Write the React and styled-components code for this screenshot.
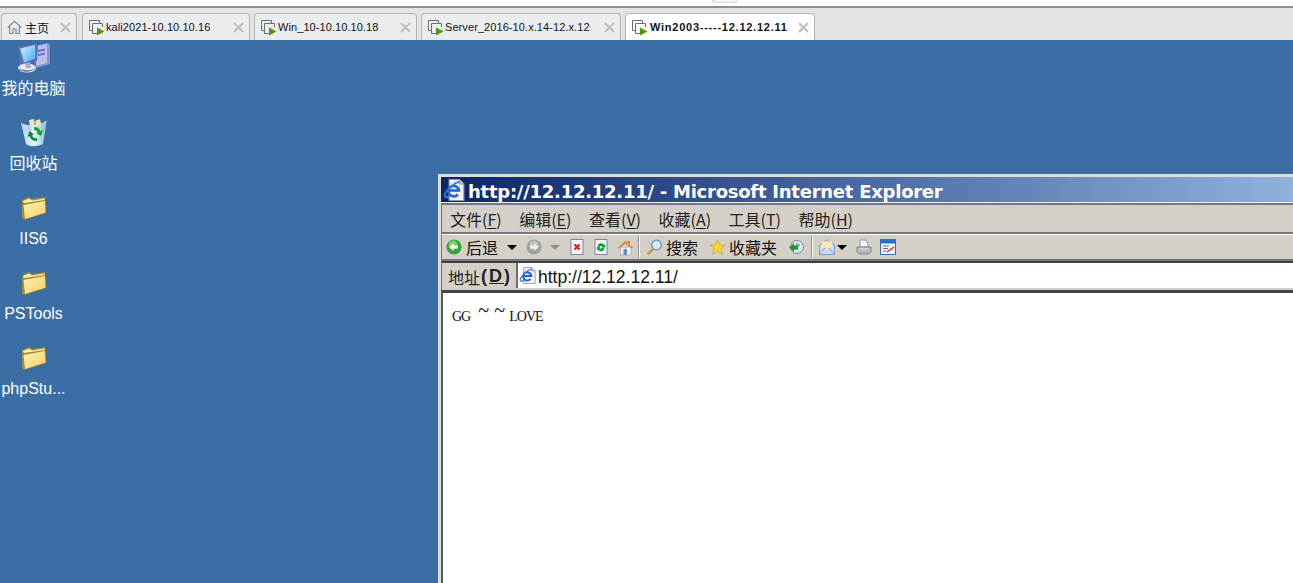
import React from 'react'
import styled, { createGlobalStyle } from 'styled-components'

const CJK = '"Noto Sans CJK SC", "Liberation Sans", sans-serif'

const GlobalStyle = createGlobalStyle`
  html, body {
    margin: 0;
    padding: 0;
    height: 100%;
    overflow: hidden;
    background: #3a6ea5;
  }
`

const VmGlyph = () => (
  <svg width="17" height="17" viewBox="0 0 17 17">
    <path d="M5 11.500H1.500V1.500H11.500V4" fill="none" stroke="#6a6e72" />
    <path d="M9 14.500H4.500V4.500H14.500V8" fill="none" stroke="#6a6e72" />
    <path d="M9 8.500L16.500 12.500L9 16.500Z" fill="#4f9a07" />
  </svg>
)

const HomeGlyph = () => (
  <svg width="15" height="15" viewBox="0 0 15 15">
    <path
      d="M.8 7.500L7.500 1.200L14.200 7.500M2.600 6.400V13.500H6V9H9V13.500H12.400V6.400"
      fill="none"
      stroke="#7b8086"
      strokeWidth="1.100"
    />
  </svg>
)

const CloseGlyph = () => (
  <svg width="11" height="11" viewBox="0 0 11 11">
    <path d="M1 1L10 10M10 1L1 10" stroke="#bcbec0" strokeWidth="2" />
  </svg>
)

const ComputerIcon = () => (
  <svg width="34" height="32" viewBox="0 0 34 32">
    <defs>
      <linearGradient id="pcScreen" x1="0" y1="0" x2="1" y2="1">
        <stop offset="0" stopColor="#d5f2ff" />
        <stop offset="1" stopColor="#46a8f2" />
      </linearGradient>
    </defs>
    <path d="M18 4L31 1L33 3V22L19 26Z" fill="#8d93d6" />
    <path d="M18 4L30 2V21L19 24Z" fill="#b9bde9" />
    <path d="M21 8L28 6.500V8.500L21 10ZM21 12L28 10.500V12.500L21 14Z" fill="#6a70b9" />
    <circle cx="29" cy="19" r="1" fill="#9ee06f" />
    <path d="M1 5L18 1L21 3L20 19L7 24L3 23Z" fill="#5a6fb0" />
    <path d="M3 6.500L18 3L18.500 16.500L7 20.500Z" fill="url(#pcScreen)" />
    <ellipse cx="10" cy="26" rx="9" ry="4.500" fill="#e4e6ef" />
    <path d="M1 26C4 31 14 31 19 26C15 29 6 29 1 26Z" fill="#6e748f" />
    <path d="M8 21L13 20L14 26H9Z" fill="#a3a8c5" />
  </svg>
)

const RecycleIcon = () => (
  <svg width="28" height="29" viewBox="0 0 28 29">
    <defs>
      <linearGradient id="binBody" x1="0" y1="0" x2="1" y2="0">
        <stop offset="0" stopColor="#a7d9f6" />
        <stop offset="0.5" stopColor="#e8f6fe" />
        <stop offset="1" stopColor="#7fb9e2" />
      </linearGradient>
    </defs>
    <path d="M1 5C8 9 20 8 27 2L23 26C17 29 10 29 6 26Z" fill="url(#binBody)" />
    <path d="M9 2L14 1L15 7L10 8ZM15 3L20 1L21 6L16 8Z" fill="#f1e6b4" />
    <path d="M6 8L11 7L12 18L8 17Z" fill="#c8c9ee" />
    <path d="M14 9A6.500 6.500 0 0 1 20.500 13L23 12L21 18L16 15L18 14.500A4 4 0 0 0 14 12Z" fill="#13a32e" />
    <path d="M17 23A6.500 6.500 0 0 1 9.500 18L7.500 19L9.500 13L14 16.500L12 17.200A4 4 0 0 0 17 20Z" fill="#0d8c28" />
  </svg>
)

const FolderIcon = () => (
  <svg width="26" height="25" viewBox="0 0 26 25">
    <defs>
      <linearGradient id="folderFace" x1="0" y1="0" x2="1" y2="1">
        <stop offset="0" stopColor="#fff3b8" />
        <stop offset="1" stopColor="#f7cf63" />
      </linearGradient>
    </defs>
    <path d="M1 4L8 1L11 3L24 1L25 17L3 24L1 22Z" fill="#a88a33" />
    <path d="M2 5L8 2.500L11 4.500L23.500 2.500V4L3 7Z" fill="#fdf1b4" />
    <path d="M2.500 9L24 5L24.500 16.500L4 23Z" fill="url(#folderFace)" />
  </svg>
)

const IeGlyph = ({ size = 20 }) => (
  <svg width={size} height={size} viewBox="0 0 20 20">
    <path d="M5.500 .5H15L19 4.500V19.500H5.500Z" fill="#f4f4f2" stroke="#8d929c" />
    <path d="M15 .5V4.500H19" fill="#c6ccd6" stroke="#8d929c" />
    <path
      d="M6 10.500H14.500A4.800 4.800 0 1 0 13.500 14"
      fill="none"
      stroke="#1f63d0"
      strokeWidth="2.400"
    />
    <path
      d="M15 3C12 2 5 8 2 13C.5 16 2 17.500 5.500 16"
      fill="none"
      stroke="#2f7ce6"
      strokeWidth="1.600"
    />
  </svg>
)

const BackGlyph = () => (
  <svg width="16" height="16" viewBox="0 0 16 16">
    <circle cx="8" cy="8" r="7.600" fill="#37a33a" />
    <circle cx="7" cy="6" r="4.500" fill="#74cf66" />
    <path d="M3.500 8L7.500 4V6.500H12V9.500H7.500V12Z" fill="#fff" />
  </svg>
)

const ForwardGlyph = () => (
  <svg width="16" height="16" viewBox="0 0 16 16">
    <circle cx="8" cy="8" r="7.600" fill="#a2a19d" />
    <circle cx="8" cy="6.500" r="4.500" fill="#c3c2bd" />
    <path d="M12.500 8L8.500 4V6.500H4V9.500H8.500V12Z" fill="#eeeeea" />
  </svg>
)

const PageGlyph = ({ children }) => (
  <svg width="14" height="16" viewBox="0 0 14 16">
    <rect x="1" y=".5" width="12" height="15" fill="#f4f6fb" stroke="#7385ad" />
    {children}
  </svg>
)

const StopGlyph = () => (
  <PageGlyph>
    <path d="M4.500 5.500L9.500 10.500M9.500 5.500L4.500 10.500" stroke="#dc2020" strokeWidth="2.200" />
  </PageGlyph>
)

const RefreshGlyph = () => (
  <PageGlyph>
    <path d="M3.500 7.500A3.500 3.500 0 0 1 10 6L11 5V8.500H7.500L8.500 7.500A1.800 1.800 0 0 0 5.500 8Z" fill="#159c30" />
    <path d="M10.500 9A3.500 3.500 0 0 1 4 10.500L3 11.500V8H6.500L5.500 9A1.800 1.800 0 0 0 8.500 8.500Z" fill="#159c30" />
  </PageGlyph>
)

const HouseGlyph = () => (
  <svg width="17" height="17" viewBox="0 0 17 17">
    <path d="M3.500 8H14V16H3.500Z" fill="#eef0f6" stroke="#9ea6b8" strokeWidth=".7" />
    <path d="M.5 9L8.500 1.500L16.500 9L14.500 9.500L8.500 4.500L2.500 9.500Z" fill="#e88a3a" />
    <path d="M6.500 10H10V16H6.500Z" fill="#5f8fd0" />
    <path d="M11 2H13V5L11 3.500Z" fill="#c96a2a" />
  </svg>
)

const SearchGlyph = () => (
  <svg width="17" height="17" viewBox="0 0 17 17">
    <path d="M7 10L1.500 15.500" stroke="#c69a58" strokeWidth="2.500" />
    <circle cx="10.500" cy="6" r="4.800" fill="#d9ecfb" stroke="#5f8ab8" strokeWidth="1.200" />
  </svg>
)

const StarGlyph = () => (
  <svg width="17" height="17" viewBox="0 0 17 17">
    <path
      d="M8.500 .8L10.800 6H16.200L11.900 9.500L13.500 15.500L8.500 12.200L3.500 15.500L5.100 9.500L.8 6H6.200Z"
      fill="#f8d63c"
      stroke="#c7a22b"
      strokeWidth=".7"
    />
  </svg>
)

const HistoryGlyph = () => (
  <svg width="16" height="16" viewBox="0 0 16 16">
    <circle cx="9" cy="8" r="6.500" fill="#dfe6ee" stroke="#7c8794" />
    <path d="M9 4V8L12 5.500" fill="none" stroke="#3f6b9c" />
    <path d="M1 8.500L6 4V6.500H10V10.500H6V13Z" fill="#1d9a37" />
  </svg>
)

const MailGlyph = () => (
  <svg width="16" height="16" viewBox="0 0 16 16">
    <path d="M.5 6L8 .8L15.500 6V15.500H.5Z" fill="#c8dcf6" stroke="#7e9ccb" />
    <path d="M3 2.500H13V8L8 10.500L3 8Z" fill="#f7e9b2" />
    <path d="M.5 15.500L6 9M15.500 15.500L10 9" stroke="#7e9ccb" fill="none" />
  </svg>
)

const PrintGlyph = () => (
  <svg width="16" height="16" viewBox="0 0 16 16">
    <path d="M4 1H10L12 5V8H4Z" fill="#f3f4f6" stroke="#8b8e94" strokeWidth=".8" />
    <path d="M1 8H15V13L13 15H3L1 13Z" fill="#b5b7bc" stroke="#73767c" strokeWidth=".8" />
    <path d="M3 10H13" stroke="#e6e7ea" />
  </svg>
)

const EditGlyph = () => (
  <svg width="16" height="16" viewBox="0 0 16 16">
    <rect x=".5" y=".5" width="15" height="15" fill="#f4f7fc" stroke="#356ab0" />
    <rect x="1" y="1" width="14" height="3.500" fill="#2b70c9" />
    <path d="M3 7H9M3 9.500H8M3 12H6" stroke="#5d6f8a" />
    <path d="M7 13L14 8" stroke="#d8503a" strokeWidth="1.600" />
  </svg>
)

const Caret = styled.span`
  width: 0;
  height: 0;
  margin-left: ${(p) => p.$gap || 0}px;
  border-style: solid;
  border-width: 5px 5px 0 5px;
  border-color: ${(p) => (p.$muted ? '#8f8e8a' : '#000')} transparent transparent;
`

const Page = styled.div`
  display: flex;
  flex-direction: column;
  width: 1293px;
  height: 583px;
  overflow: hidden;
`

const TopEdge = styled.div`
  height: 6px;
  padding-left: 712px;
  background: #fff;
  border-bottom: 2px solid #8e8e8e;
`

const TopNotch = styled.div`
  box-sizing: border-box;
  width: 25px;
  height: 3px;
  border: 1px solid #d8d8d8;
  border-top: 0;
  border-radius: 0 0 4px 4px;
  background: #f4f4f4;
`

const TabStrip = styled.div`
  display: flex;
  align-items: flex-end;
  gap: 4px;
  height: 32px;
  padding-left: 1px;
  background: #e3e4e5;
`

const Tab = styled.div`
  display: flex;
  align-items: center;
  box-sizing: border-box;
  flex: none;
  width: ${(p) => p.$width}px;
  height: 27px;
  margin-right: ${(p) => p.$after || 0}px;
  padding: 0 5px;
  border: 1px solid #b3b3b3;
  border-bottom: 0;
  border-radius: 4px 4px 0 0;
  background: ${(p) => (p.$active ? '#fff' : '#ebecee')};
  font: ${(p) => (p.$active ? 'bold' : 'normal')} 11px "Liberation Sans", ${CJK};
  letter-spacing: ${(p) => (p.$active ? 0.75 : 0.08)}px;
  color: #10131a;
  white-space: nowrap;
`

const TabLabel = styled.span`
  flex: 1;
  margin-left: ${(p) => p.$gap}px;
  font-size: ${(p) => p.$size || 11}px;
`

const Desktop = styled.div`
  display: flex;
  flex: 1;
  min-height: 0;
  overflow: hidden;
  background: #3a6ea5;
`

const IconColumn = styled.div`
  display: flex;
  flex-direction: column;
  flex: none;
  width: 67px;
`

const Shortcut = styled.div`
  display: flex;
  flex-direction: column;
  align-items: center;
  justify-content: flex-end;
  box-sizing: border-box;
  height: 75px;
  padding-bottom: 8px;
  color: #fff;
  font: 16px/20px "Liberation Sans", ${CJK};
  white-space: nowrap;
  &:first-child {
    height: 67px;
  }
`

const ShortcutLabel = styled.span`
  margin-top: ${(p) => p.$gap}px;
`

const WindowSlot = styled.div`
  flex: none;
  width: 1000px;
  margin: 134px 0 0 371px;
`

const Browser = styled.div`
  height: 420px;
  box-sizing: border-box;
  padding: 3px 0 0 3px;
  background: #dedcd6;
`

const TitleBar = styled.div`
  display: flex;
  align-items: center;
  height: 25px;
  padding-left: 2px;
  border-bottom: 1px solid #f2f1ed;
  background: linear-gradient(90deg, #0a246a, #a6caf0);
  color: #fff;
  font: bold 18px/25px "DejaVu Sans", sans-serif;
  letter-spacing: -0.25px;
  white-space: nowrap;
`

const TitleText = styled.span`
  margin: 3px 0 0 3px;
`

const Bar = styled.div`
  display: flex;
  align-items: center;
  box-sizing: border-box;
  height: ${(p) => p.$height}px;
  padding-left: ${(p) => p.$pad}px;
  background: #d4d0c8;
  border-top: ${(p) => p.$top};
  border-bottom: 2px solid #77767a;
  border-left: 1px solid #77767a;
  color: #111;
  white-space: nowrap;
`

const MenuItem = styled.span`
  margin-right: 17.5px;
  font: 16px ${CJK};
  color: #222;
  u {
    text-underline-offset: 2px;
  }
`

const ToolText = styled.span`
  margin-left: ${(p) => p.$gap}px;
  font: 16px ${CJK};
  color: #111;
`

const ToolSlot = styled.span`
  display: inline-flex;
  margin-left: ${(p) => p.$gap}px;
`

const ToolDivider = styled.span`
  width: 1px;
  height: 22px;
  margin: 0 7px 0 ${(p) => p.$gap}px;
  background: #8f8d88;
  box-shadow: 1px 0 0 #fff;
`

const AddressBar = styled.div`
  display: flex;
  align-items: stretch;
  box-sizing: border-box;
  height: 29px;
  background: #d4d0c8;
  border-top: 2px solid #3f3f40;
  border-left: 1px solid #77767a;
`

const AddressLabel = styled.div`
  display: flex;
  align-items: center;
  flex: none;
  box-sizing: border-box;
  width: 74px;
  padding-left: 6px;
  font: 16px ${CJK};
  color: #222;
  span {
    margin-left: 1px;
    font: bold 18px "Liberation Sans", sans-serif;
    letter-spacing: 2px;
  }
`

const AddressField = styled.div`
  display: flex;
  align-items: center;
  flex: 1;
  padding-left: 1px;
  margin-bottom: 2px;
  background: #fff;
  border-left: 2px solid #6f6e6b;
  font: 17.5px "Liberation Sans", sans-serif;
  color: #111;
`

const AddressText = styled.span`
  margin: 3px 0 0 2px;
`

const Viewport = styled.div`
  height: 292px;
  padding: 11px 0 0 9px;
  background: #fff;
  border-top: 3px solid #454547;
  border-left: 2px solid #5a5a5c;
  font: 14px "Liberation Serif", serif;
  letter-spacing: -1px;
  color: #111;
  white-space: pre;
`

const Tilde = styled.span`
  display: inline-block;
  width: 12px;
  margin: 0 ${(p) => p.$after || 0}px 0 ${(p) => p.$gap}px;
  font-size: 20px;
  letter-spacing: 0;
  line-height: 12px;
  vertical-align: 4px;
`

const Tabs = [
  { label: 'kali2021-10.10.10.16', width: 168 },
  { label: 'Win_10-10.10.10.18', width: 163 },
  { label: 'Server_2016-10.x.14-12.x.12', width: 200 },
  { label: 'Win2003-----12.12.12.11', width: 190, active: true },
]

const Shortcuts = [
  { label: '我的电脑', icon: <ComputerIcon />, gap: 5 },
  { label: '回收站', icon: <RecycleIcon />, gap: 7 },
  { label: 'IIS6', icon: <FolderIcon />, gap: 8 },
  { label: 'PSTools', icon: <FolderIcon />, gap: 8 },
  { label: 'phpStu...', icon: <FolderIcon />, gap: 8 },
]

const Menus = [
  ['文件(', 'F', ')'],
  ['编辑(', 'E', ')'],
  ['查看(', 'V', ')'],
  ['收藏(', 'A', ')'],
  ['工具(', 'T', ')'],
  ['帮助(', 'H', ')'],
]

const App = () => (
  <Page>
    <GlobalStyle />
    <TopEdge>
      <TopNotch />
    </TopEdge>
    <TabStrip>
      <Tab $width={76} $after={1}>
        <HomeGlyph />
        <TabLabel $gap={3} $size={12}>主页</TabLabel>
        <CloseGlyph />
      </Tab>
      {Tabs.map((tab) => (
        <Tab key={tab.label} $width={tab.width} $active={tab.active}>
          <VmGlyph />
          <TabLabel $gap={tab.active ? 2 : 1}>{tab.label}</TabLabel>
          <CloseGlyph />
        </Tab>
      ))}
    </TabStrip>
    <Desktop>
      <IconColumn>
        {Shortcuts.map((item) => (
          <Shortcut key={item.label}>
            {item.icon}
            <ShortcutLabel $gap={item.gap}>{item.label}</ShortcutLabel>
          </Shortcut>
        ))}
      </IconColumn>
      <WindowSlot>
        <Browser>
          <TitleBar>
            <IeGlyph size={22} />
            <TitleText>http://12.12.12.11/ - Microsoft Internet Explorer</TitleText>
          </TitleBar>
          <Bar $height={31} $pad={8} $top="2px solid #77767a">
            {Menus.map(([before, key, after]) => (
              <MenuItem key={key}>
                {before}
                <u>{key}</u>
                {after}
              </MenuItem>
            ))}
          </Bar>
          <Bar $height={27} $pad={4} $top="1px solid #fff">
            <BackGlyph />
            <ToolText $gap={4}>后退</ToolText>
            <Caret $gap={9} />
            <ToolSlot $gap={9}><ForwardGlyph /></ToolSlot>
            <Caret $gap={8} $muted />
            <ToolSlot $gap={10}><StopGlyph /></ToolSlot>
            <ToolSlot $gap={10}><RefreshGlyph /></ToolSlot>
            <ToolSlot $gap={9}><HouseGlyph /></ToolSlot>
            <ToolDivider $gap={4} />
            <SearchGlyph />
            <ToolText $gap={3}>搜索</ToolText>
            <ToolSlot $gap={11}><StarGlyph /></ToolSlot>
            <ToolText $gap={3}>收藏夹</ToolText>
            <ToolSlot $gap={11}><HistoryGlyph /></ToolSlot>
            <ToolDivider $gap={7} />
            <MailGlyph />
            <Caret $gap={2} />
            <ToolSlot $gap={9}><PrintGlyph /></ToolSlot>
            <ToolSlot $gap={8}><EditGlyph /></ToolSlot>
          </Bar>
          <AddressBar>
            <AddressLabel>
              地址<span>(<u>D</u>)</span>
            </AddressLabel>
            <AddressField>
              <IeGlyph size={17} />
              <AddressText>http://12.12.12.11/</AddressText>
            </AddressField>
          </AddressBar>
          <Viewport>
            GG
            <Tilde $gap={8}>~</Tilde>
            <Tilde $gap={4} $after={3}>~</Tilde>
            LOVE
          </Viewport>
        </Browser>
      </WindowSlot>
    </Desktop>
  </Page>
)

export default App
